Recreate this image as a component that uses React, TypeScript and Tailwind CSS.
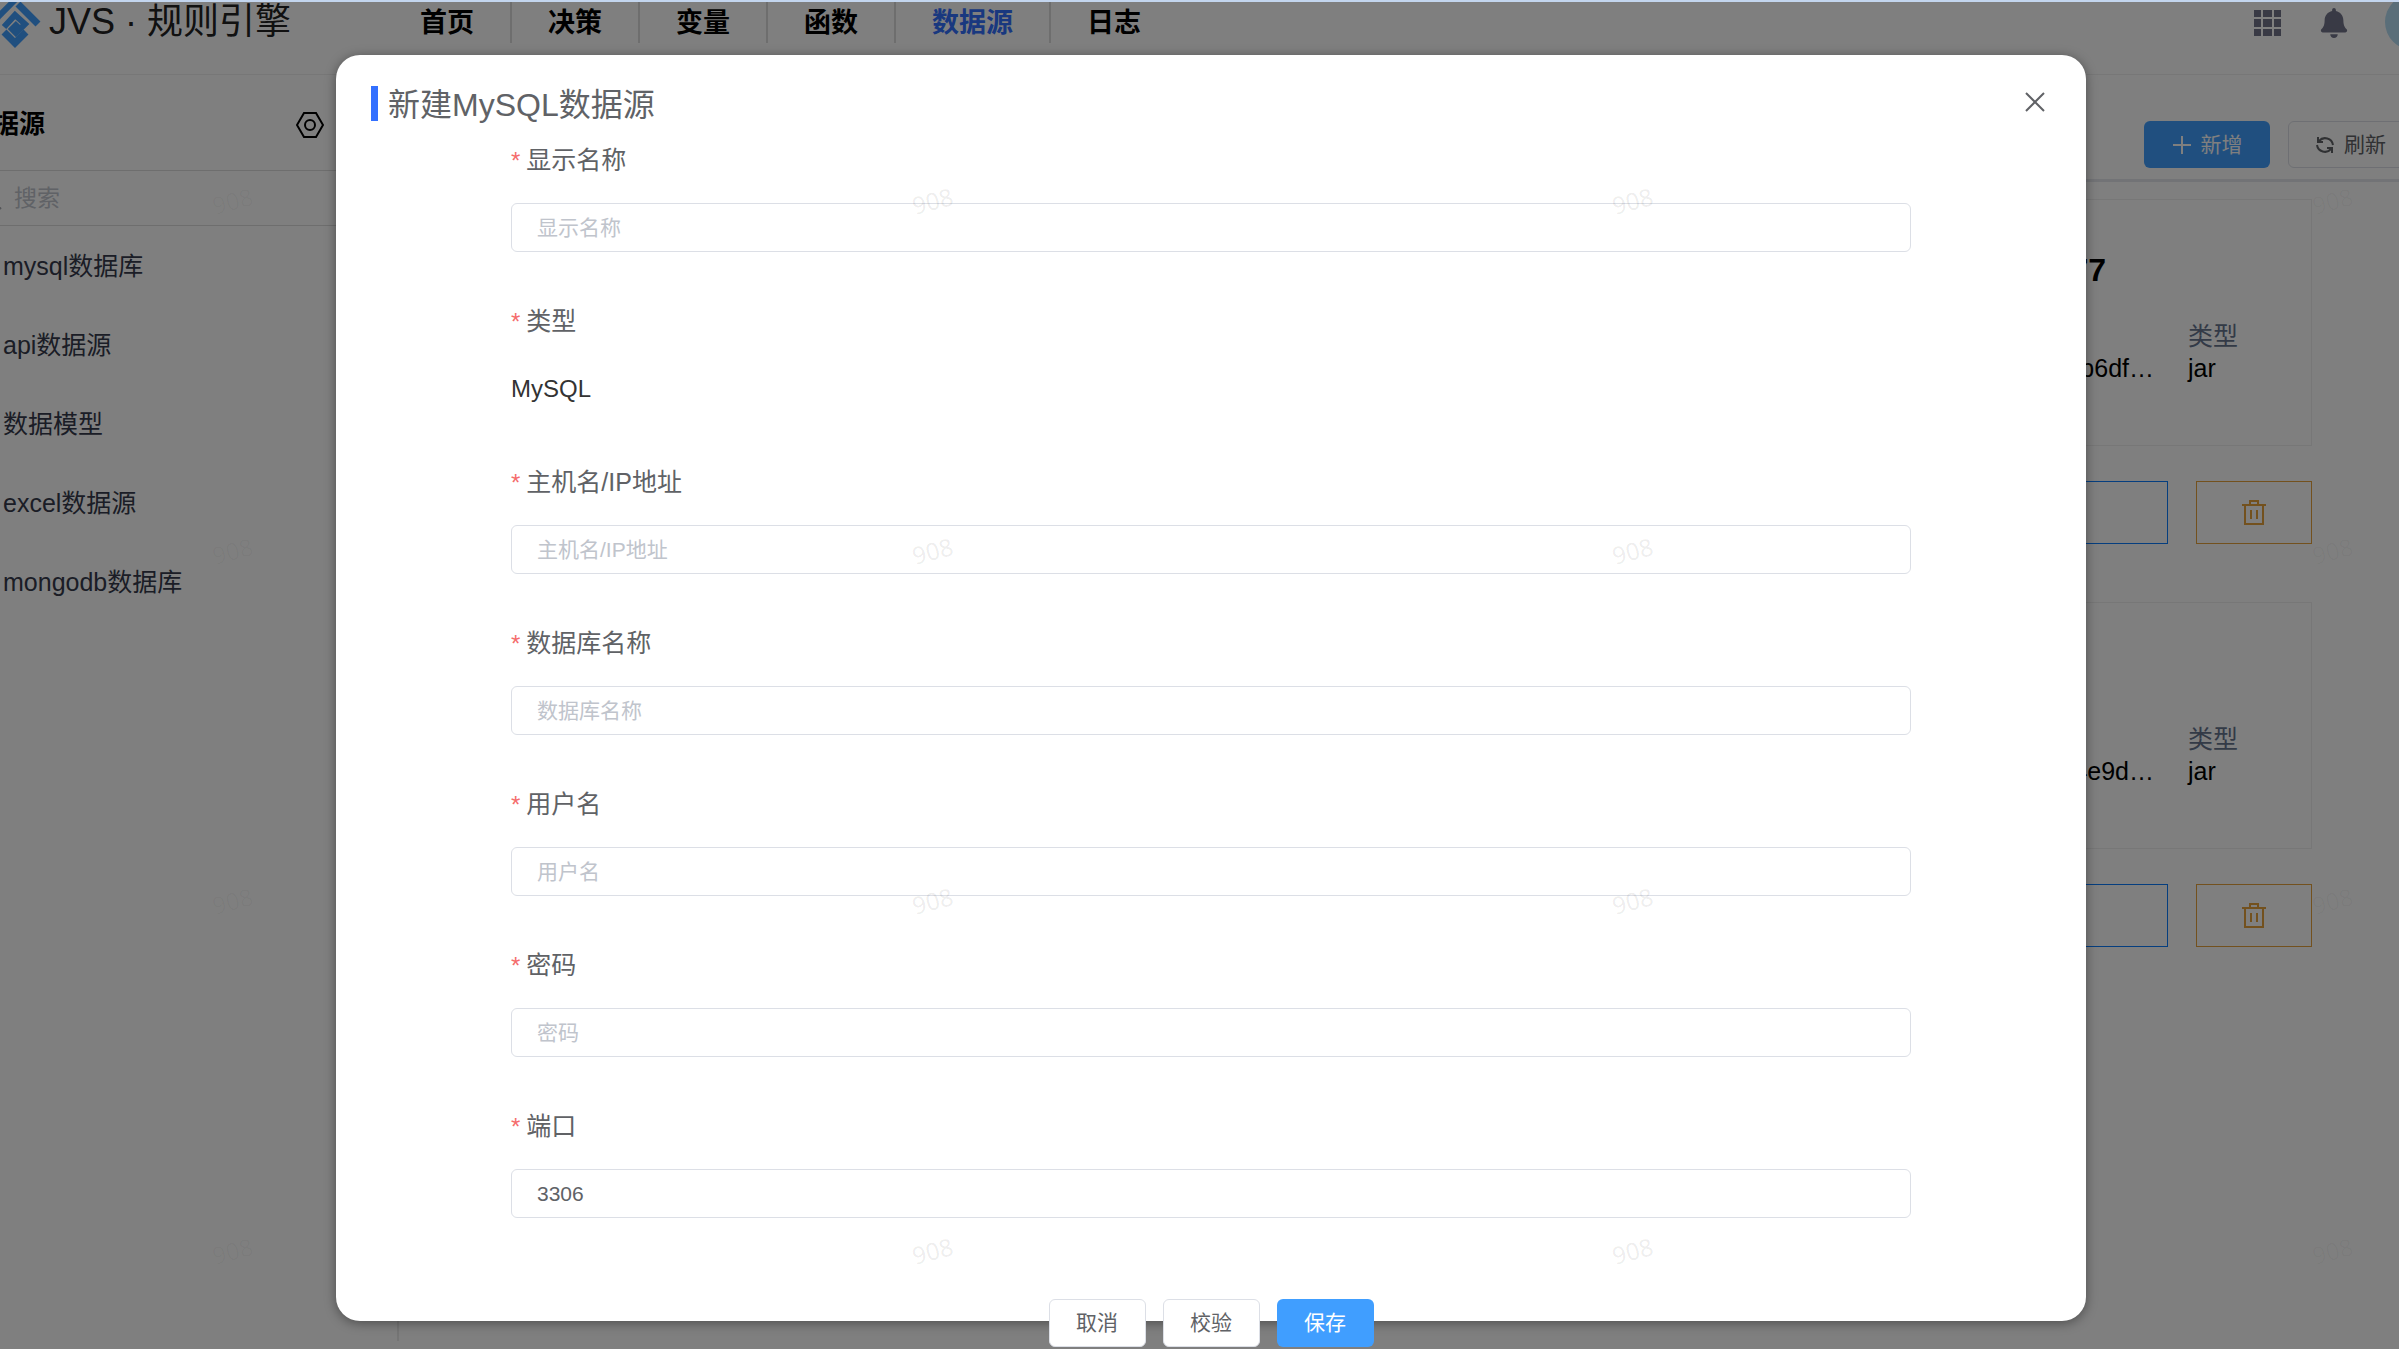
import { useState } from "react";
import { FaBell } from "react-icons/fa";

interface Field {
  name: string;
  label: string;
  fixed?: string;
}

interface Card {
  id: string;
  title: string;
  hash: string;
  type: string;
}

const navItems = ["首页", "决策", "变量", "函数", "数据源", "日志"];

const sourceTypes = ["mysql数据库", "api数据源", "数据模型", "excel数据源", "mongodb数据库"];

const fields: Field[] = [
  { name: "name", label: "显示名称" },
  { name: "type", label: "类型", fixed: "MySQL" },
  { name: "host", label: "主机名/IP地址" },
  { name: "database", label: "数据库名称" },
  { name: "user", label: "用户名" },
  { name: "password", label: "密码" },
  { name: "port", label: "端口" },
];

const cards: Card[] = [
  { id: "a", title: "77", hash: "b6df…", type: "jar" },
  { id: "b", title: "", hash: "4e9d…", type: "jar" },
];

const marks = [0, 1, 2, 3].flatMap(row => [0, 1, 2, 3].map(col => ({ row, col })));

function LogoMark() {
  return (
    <svg width="52" height="52" viewBox="0 0 52 52" fill="none" stroke="#409eff" strokeWidth="6">
      <path d="M3 25 L26 2" />
      <path d="M29 6 L49 26" strokeWidth="7" />
      <path d="M15 29 L26 17 L36 26 L27 35 L23 31 L29 25" />
      <path d="M15 34 L26 45 L37 34" strokeWidth="7" />
    </svg>
  );
}

function Header() {
  return (
    <header className="flex h-[73px] items-start overflow-hidden border-b border-[#eeeeee] bg-white">
      <div className="flex w-[423px] shrink-0 items-center gap-2 pl-7">
        <div className="-mt-1">
          <LogoMark />
        </div>
        <span className="-mt-2 text-[36px] leading-10 whitespace-nowrap text-[#222222]">JVS · 规则引擎</span>
      </div>
      <nav className="flex">
        {navItems.map(item => (
          <a
            key={item}
            href="#"
            className={
              item === "数据源"
                ? "h-[41px] border-r-2 border-[#dddddd] px-9 text-[27px] leading-[42px] font-bold text-[#3370ff]"
                : "h-[41px] border-r-2 border-[#dddddd] px-9 text-[27px] leading-[42px] font-bold text-black last:border-r-0"
            }
          >
            {item}
          </a>
        ))}
      </nav>
      <div className="ml-auto flex items-start pr-5">
        <button aria-label="应用" className="mt-2 mr-[38px]">
          <svg width="27" height="27" viewBox="0 0 27 27" fill="#72748a">
            {[0, 9, 19].map(y =>
              [0, 9, 20].map(x => (
                <rect key={`${x}-${y}`} x={x} y={y} width={x === 9 ? 9 : 7} height={y === 9 ? 8 : 7} />
              ))
            )}
          </svg>
        </button>
        <button aria-label="通知" className="mt-[6px] mr-9">
          <FaBell size={30} color="#72748a" />
        </button>
        <span className="-mt-2 size-14 rounded-full bg-[#b5dcf2]" />
      </div>
    </header>
  );
}

function Sidebar() {
  return (
    <aside className="mb-2 w-[438px] shrink-0 border-r-2 border-[#ebebeb]">
      <div className="flex h-24 items-center justify-between border-b border-[#dcdcdc] pt-1 pr-[73px] pl-[6px]">
        <h2 className="text-[26px] font-bold text-black">数据源</h2>
        <button aria-label="设置">
          <svg width="28" height="28" viewBox="0 0 28 28" fill="none" stroke="#000" strokeWidth="2">
            <path d="M8 2 H20 L27 14 L20 26 H8 L1 14 Z" />
            <circle cx="14" cy="14" r="5" />
          </svg>
        </button>
      </div>
      <div className="flex h-[55px] items-center gap-3 border-b border-[#dcdcdc] pl-[17px]">
        <svg width="24" height="24" viewBox="0 0 24 24" fill="none" stroke="#a8abb2" strokeWidth="2">
          <circle cx="11" cy="11" r="9" />
          <path d="M17 17 L23 23" />
        </svg>
        <input
          aria-label="搜索"
          placeholder="搜索"
          className="w-60 text-[23px] outline-none placeholder:text-[#c0c4cc]"
        />
      </div>
      <ul className="pt-px">
        {sourceTypes.map(type => (
          <li key={type} className="flex h-[79px] items-center pl-[42px] text-[25px] text-[#363b4c]">
            {type}
          </li>
        ))}
      </ul>
    </aside>
  );
}

function SourceCard({ card }: { card: Card }) {
  return (
    <div>
      <div className="flex h-[247px] flex-col border border-[#eeeeee] pt-[46px]">
        <h3 className="h-12 pr-[205px] text-right text-[32px] leading-12 font-bold text-black">{card.title}</h3>
        <div className="mt-[26px] flex text-[25px] leading-8 text-black">
          <p className="flex-1 self-end pr-[34px] text-right">{card.hash}</p>
          <div className="w-[123px]">
            <p className="text-[#66748e]">类型</p>
            <p>{card.type}</p>
          </div>
        </div>
      </div>
      <div className="mt-[35px] flex h-[63px] gap-7">
        <button aria-label="编辑" className="flex-1 border border-[#0a7cff]" />
        <button aria-label="删除" className="flex w-[116px] items-center justify-center border border-[#e6a23c]">
          <svg width="26" height="26" viewBox="0 0 26 26" fill="none" stroke="#e6a23c" strokeWidth="2">
            <path d="M1 5 H25 M4 5 V24 H22 V5 M9 5 V1 H17 V5 M10 10 V19 M16 10 V19" />
          </svg>
        </button>
      </div>
    </div>
  );
}

function Main() {
  return (
    <main className="flex-1">
      <div className="flex h-[107px] items-start justify-end gap-[18px] border-b-3 border-[#e4e7ed] pt-[46px] pr-[47px]">
        <button className="flex h-[47px] w-[126px] items-center justify-center gap-[9px] rounded-md bg-[#409eff] text-[21px] text-white">
          <svg width="20" height="20" viewBox="0 0 20 20" stroke="#fff" strokeWidth="2">
            <path d="M1 10 H19 M10 1 V19" />
          </svg>
          新增
        </button>
        <button className="flex h-[47px] w-[126px] items-center justify-center gap-[10px] rounded-md border border-[#dcdfe6] text-[21px] text-[#606266]">
          <svg width="18" height="18" viewBox="0 0 18 18" fill="none" stroke="#606266" strokeWidth="2">
            <path d="M2 1 V6 H7 M3 5 A8 8 0 0 1 17 9" />
            <path d="M16 17 V12 H11 M15 13 A8 8 0 0 1 1 9" />
          </svg>
          刷新
        </button>
      </div>
      <div className="flex flex-col gap-[58px] pt-[17px] pr-[149px] pl-8">
        {cards.map(card => (
          <SourceCard key={card.id} card={card} />
        ))}
      </div>
    </main>
  );
}

function CreateDialog() {
  const [values, setValues] = useState<Record<string, string>>({ port: "3306" });

  return (
    <div
      role="dialog"
      aria-label="新建MySQL数据源"
      className="w-[70%] rounded-3xl bg-white shadow-[0_2px_12px_rgba(0,0,0,0.4)]"
    >
      <div className="flex items-start pt-[31px] pr-10 pl-[35px]">
        <span className="h-[35px] w-[7px] bg-[#3370ff]" />
        <h1 className="ml-[10px] text-[32px] leading-[38px] text-[#606266]">新建MySQL数据源</h1>
        <button aria-label="关闭" className="mt-[5px] ml-auto">
          <svg width="22" height="22" viewBox="0 0 22 22" stroke="#606266" strokeWidth="2">
            <path d="M2 2 L20 20 M20 2 L2 20" />
          </svg>
        </button>
      </div>

      <form className="mx-auto mt-[19px] w-4/5">
        {fields.map(field => (
          <div key={field.name} className="mb-[52px]">
            <label htmlFor={field.name} className="flex h-9 items-center gap-[6px] text-[25px] text-[#606266]">
              <span className="text-2xl text-[#f56c6c]">*</span>
              {field.label}
            </label>
            {field.fixed ? (
              <output id={field.name} className="mt-6 flex h-[49px] items-center text-2xl text-[#333333]">
                {field.fixed}
              </output>
            ) : (
              <input
                id={field.name}
                type={field.name === "password" ? "password" : "text"}
                placeholder={field.label}
                value={values[field.name] ?? ""}
                onChange={e => setValues({ ...values, [field.name]: e.target.value })}
                className="mt-6 block h-[49px] w-full rounded-md border border-[#dcdfe6] px-[25px] text-[21px] text-[#606266] outline-none placeholder:text-[#c0c4cc]"
              />
            )}
          </div>
        ))}
      </form>

      <div className="mt-[81px] -mb-[26px] flex justify-center gap-[17px] text-[21px]">
        <button className="h-12 w-[97px] rounded-md border border-[#dcdfe6] bg-white text-[#606266]">取消</button>
        <button className="h-12 w-[97px] rounded-md border border-[#dcdfe6] bg-white text-[#606266]">校验</button>
        <button className="h-12 w-[97px] rounded-md bg-[#409eff] text-white">保存</button>
      </div>
    </div>
  );
}

export default function App() {
  return (
    <div className="relative flex min-h-screen flex-col overflow-hidden bg-white font-['Liberation_Sans','Noto_Sans_CJK_SC',sans-serif]">
      <div className="h-[2px] bg-[#c3d5ee]" />
      <div className="-mr-[62px] -ml-[39px] grid flex-1">
        <div className="col-start-1 row-start-1 flex flex-col">
          <Header />
          <div className="flex flex-1">
            <Sidebar />
            <Main />
          </div>
        </div>
        <div className="z-10 col-start-1 row-start-1 flex items-start justify-center bg-black/50 pt-[53px]">
          <CreateDialog />
        </div>
      </div>
      <div aria-hidden="true" className="pointer-events-none absolute inset-0 z-20">
        {marks.map(({ row, col }) => (
          <span
            key={`${row}-${col}`}
            className={
              col === 1 || col === 2
                ? "absolute -rotate-15 font-['Noto_Sans'] text-2xl text-black/8"
                : "absolute -rotate-15 font-['Noto_Sans'] text-2xl text-black/3"
            }
            style={{ left: 212 + col * 700, top: 185 + row * 350 }}
          >
            908
          </span>
        ))}
      </div>
    </div>
  );
}
